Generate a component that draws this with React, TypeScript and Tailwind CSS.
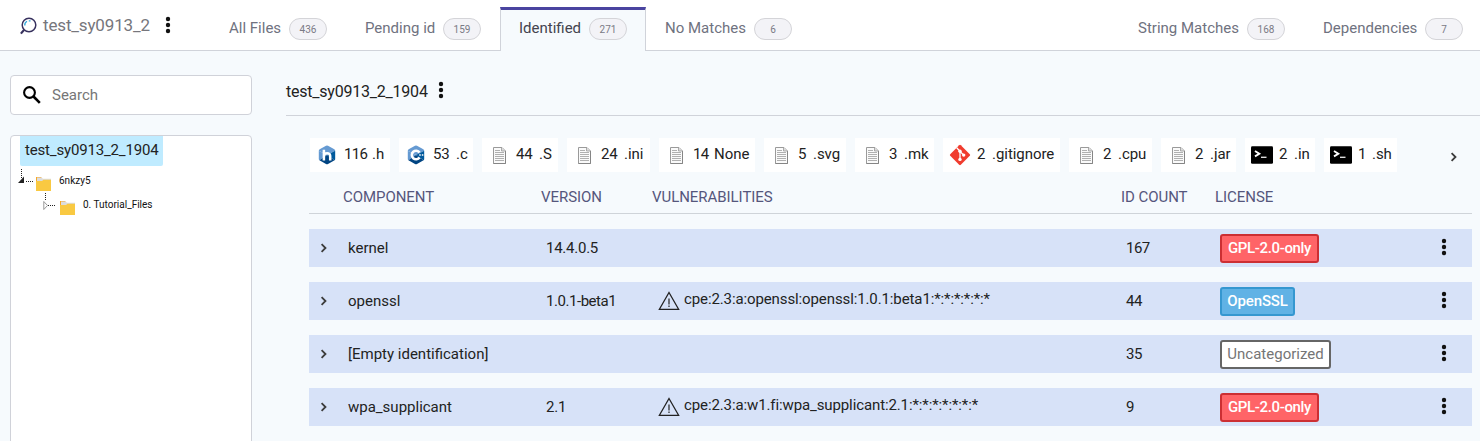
import React from "react";

type Kind = "h" | "c" | "doc" | "git" | "term";

function Dots({ className = "" }: { className?: string }) {
  return (
    <svg className={className} width="6" height="18" viewBox="0 0 6 18">
      <circle cx="3" cy="3" r="2.2" fill="#111" />
      <circle cx="3" cy="9" r="2.2" fill="#111" />
      <circle cx="3" cy="15" r="2.2" fill="#111" />
    </svg>
  );
}

function Chevron() {
  return (
    <svg width="8" height="10" viewBox="0 0 8 10" fill="none" stroke="#3c3c3c" strokeWidth="1.8">
      <path d="M1.6 1.1 5.5 5 1.6 8.9" />
    </svg>
  );
}

function Hexagon({ children }: { children: React.ReactNode }) {
  return (
    <svg width="18" height="20" viewBox="0 0 18 20">
      <path d="M8 .7q1-.5 2 0l6.300 3.600q.9.5.9 1.500L9 10 .8 5.800q0-1 .9-1.500z" fill="#659ad2" />
      <path d="M.8 5.800 9 10l-7.600 5.200q-.6-.5-.6-1.300z" fill="#659ad2" />
      <path d="M17.200 5.800 9 10l7.600 5.200q.6-.5.6-1.300z" fill="#00599c" />
      <path d="M1.400 15.200 9 10l7.600 5.200L10 19.100q-1 .5-2 0z" fill="#004482" />
      {children}
    </svg>
  );
}

function FileIcon({ kind }: { kind: Kind }) {
  switch (kind) {
    case "h":
      return (
        <Hexagon>
          <path d="M5.900 4.800v10.600M5.900 10.500q.4-2.300 3.200-2.300t3.100 2.600v4.600" fill="none" stroke="#fff" strokeWidth="2.500" />
        </Hexagon>
      );
    case "c":
      return (
        <Hexagon>
          <path d="M12.600 7.500A4.300 4.300 0 1 0 12.600 12.500" fill="none" stroke="#fff" strokeWidth="2.500" />
          <path d="M12 10h2M13 9v2M14.600 10h2M15.600 9v2" stroke="#fff" strokeWidth=".7" />
        </Hexagon>
      );
    case "doc":
      return (
        <svg width="13" height="17" viewBox="0 0 13 17">
          <path d="M.5.5h8.500l3.500 3.500v12.500H.5z" fill="#fafafa" stroke="#9a9a9a" />
          <path d="M.5 16.500h12V4" fill="none" stroke="#858585" />
          <path d="M8.500.5v3.500h4" fill="#ddd" stroke="#999" strokeWidth=".8" />
          <path d="M2 3.500h5M2 5.500h9M2 7.500h9M2 9.500h9M2 11.500h9M2 13.500h9" stroke="#b0b0b0" />
        </svg>
      );
    case "git":
      return (
        <svg width="22" height="22" viewBox="0 0 22 22">
          <rect x="3.500" y="3.500" width="15" height="15" rx="1.200" fill="#f03c2e" transform="rotate(45 11 11)" />
          <path d="M7.700 3.800 11 7.200v8M11 7.400l3.600 3.600" fill="none" stroke="#fff" strokeWidth="1.300" />
          <circle cx="11" cy="7.300" r="1.700" fill="#fff" />
          <circle cx="11" cy="15.400" r="1.700" fill="#fff" />
          <circle cx="14.700" cy="11.100" r="1.700" fill="#fff" />
        </svg>
      );
    case "term":
      return (
        <svg width="22" height="18" viewBox="0 0 22 18">
          <rect width="22" height="17.500" y=".2" rx="1.300" fill="#000" />
          <path d="m4 5 4.300 2.700L4 10.400" fill="none" stroke="#fff" strokeWidth="1.900" />
          <path d="M10 11.300h5.500" stroke="#ddd" strokeWidth="1.400" />
        </svg>
      );
  }
}

function Folder() {
  return (
    <svg width="15" height="14" viewBox="0 0 15 14">
      <path d="M0 0h5l1.500 2H15v12H0z" fill="#f9a825" />
      <path d="M1 .5h4.500l1 1.200H15V4H1z" fill="#dcdcdc" />
      <path d="M0 4h6l1.500-1.200H15V14H0z" fill="#f9c942" />
    </svg>
  );
}

function Badge({ n }: { n: number }) {
  return (
    <span className="flex h-[22px] w-[38px] shrink-0 items-center justify-center rounded-full border border-[#d4d4d8] bg-[#f3f3f7] pt-px text-[10px] text-[#7a7a85]">
      {n}
    </span>
  );
}

function Tab({ label, n, className, active }: { label: string; n: number; className: string; active?: boolean }) {
  return (
    <div
      className={
        "flex shrink-0 justify-between border-x " +
        (active
          ? "mt-[7px] h-11 border-t-[3px] border-[#d0d3da] border-t-[#4a44a0] bg-[#f6fafd] pt-2 text-[#44444f] "
          : "mt-[7px] h-[43px] border-transparent pt-[11px] text-[#6f7280] ") + className
      }
    >
      <span className="leading-5 whitespace-nowrap">{label}</span>
      <Badge n={n} />
    </div>
  );
}

const chips: { kind: Kind; n: number; ext: string; w: string; icon: string; num: string }[] = [
  { kind: "h", n: 116, ext: ".h", w: "w-20", icon: "pl-2", num: "w-[28px] tracking-[-0.7px]" },
  { kind: "c", n: 53, ext: ".c", w: "w-[74px]", icon: "pl-2", num: "w-[23px] tracking-[-0.2px]" },
  { kind: "doc", n: 44, ext: ".S", w: "w-[76px]", icon: "pl-[11px]", num: "w-[23px] tracking-[-0.2px]" },
  { kind: "doc", n: 24, ext: ".ini", w: "w-[83px]", icon: "pl-[11px]", num: "w-[23px] tracking-[-0.2px]" },
  { kind: "doc", n: 14, ext: "None", w: "w-24", icon: "pl-[11px]", num: "w-[21px] tracking-[-0.8px]" },
  { kind: "doc", n: 5, ext: ".svg", w: "w-[82px]", icon: "pl-[11px]", num: "w-[15px]" },
  { kind: "doc", n: 3, ext: ".mk", w: "w-[79px]", icon: "pl-[11px]", num: "w-[15px]" },
  { kind: "git", n: 2, ext: ".gitignore", w: "w-[117px]", icon: "pl-1.5", num: "w-[15px]" },
  { kind: "doc", n: 2, ext: ".cpu", w: "w-[83px]", icon: "pl-[11px]", num: "w-[15px]" },
  { kind: "doc", n: 2, ext: ".jar", w: "w-[75px]", icon: "pl-[11px]", num: "w-[15px]" },
  { kind: "term", n: 2, ext: ".in", w: "w-[70px]", icon: "pl-1.5", num: "w-[15px]" },
  { kind: "term", n: 1, ext: ".sh", w: "w-[73px]", icon: "pl-1.5", num: "w-[14px]" },
];

const red = "border-[#cc2f33] bg-[#ff6467] text-white font-medium tracking-[-0.35px]";
const blue = "border-[#3597d0] bg-[#60b2e5] text-white font-medium tracking-[-0.1px]";
const plain = "border-[#666] bg-white text-[#757575]";

const rows = [
  { name: "kernel", version: "14.4.0.5", vt: "tracking-[-0.25px]", cpe: "", count: 167, license: "GPL-2.0-only", style: red, w: "w-[99px]" },
  { name: "openssl", version: "1.0.1-beta1", vt: "tracking-[-0.45px]", cpe: "cpe:2.3:a:openssl:openssl:1.0.1:beta1:*:*:*:*:*:*", count: 44, license: "OpenSSL", style: blue, w: "w-[75px]" },
  { name: "[Empty identification]", version: "", vt: "", cpe: "", count: 35, license: "Uncategorized", style: plain, w: "w-[111px]" },
  { name: "wpa_supplicant", version: "2.1", vt: "tracking-[-0.25px]", cpe: "cpe:2.3:a:w1.fi:wpa_supplicant:2.1:*:*:*:*:*:*:*", count: 9, license: "GPL-2.0-only", style: red, w: "w-[99px]" },
];

function Header() {
  return (
    <header className="flex h-[51px] border-b border-[#d0d3da] bg-white">
      <div className="flex w-[214px] shrink-0 pl-5 pt-4">
        <svg className="mt-px shrink-0" width="17" height="18" viewBox="0 0 17 18" fill="none">
          <circle cx="9" cy="8" r="6.800" stroke="#38325f" strokeWidth="1.500" />
          <path d="M4.200 12.800.9 16.600" stroke="#38325f" strokeWidth="2.200" />
          <path d="M4.800 8.500A4.300 4.300 0 0 1 7 4.300M8.800 3.800h1.700" stroke="#2fa8dc" strokeWidth="1.300" />
        </svg>
        <span className="ml-1.5 w-[108px] text-[17px] leading-[19px] tracking-[-0.15px] whitespace-nowrap text-[#76767c]">test_sy0913_2</span>
        <Dots className="ml-[14px] shrink-0" />
      </div>
      <Tab label="All Files" n={436} className="w-[116px] pl-[14px] pr-0.5" />
      <Tab label="Pending id" n={159} className="ml-5 w-[146px] pl-[14px] pr-[14px]" />
      <Tab label="Identified" n={271} className="ml-1 w-[146px] pl-[18px] pr-[18px]" active />
      <Tab label="No Matches" n={6} className="w-[147px] pl-[18px] pr-0" />
      <div className="flex-1" />
      <Tab label="String Matches" n={168} className="w-[149px] pl-0 pr-0" />
      <Tab label="Dependencies" n={7} className="ml-9 mr-4 w-[142px] pl-0 pr-0" />
    </header>
  );
}

function Sidebar() {
  return (
    <aside className="w-[252px] shrink-0 pl-2.5 pt-6">
      <div className="flex h-10 items-center rounded-[4px] border border-[#d0d2d9] bg-white pl-3">
        <svg width="18" height="18" viewBox="0 0 18 18" fill="none" stroke="#000">
          <circle cx="6.500" cy="6.500" r="5.400" strokeWidth="2.100" />
          <path d="m10.500 10.500 6.300 6.300" strokeWidth="2.600" />
        </svg>
        <span className="ml-[11px] text-[#767676]">Search</span>
      </div>
      <div className="mt-5 h-[320px] rounded-[4px] border border-[#d0d2d9] bg-white">
        <div className="ml-[9px] h-[30px] w-[143px] rounded-b-[2px] bg-[#bfebff] pl-[5px] leading-7 tracking-[-0.17px] whitespace-nowrap text-[#222]">
          test_sy0913_2_1904
        </div>
        <div className="flex h-6 pl-[7px]">
          <svg className="mt-[3px] shrink-0" width="15" height="14" viewBox="0 0 15 14">
            <path d="M3.500 0v9M8 12.500h7" stroke="#222" strokeDasharray="1 1" />
            <path d="M0 14h6V7.500z" fill="#222" />
          </svg>
          <div className="ml-[3px] mt-[11px]"><Folder /></div>
          <span className="ml-2 mt-[9px] text-[10px] leading-3 text-[#111]">6nkzy5</span>
        </div>
        <div className="flex h-6 pl-8">
          <svg className="mt-[3px] shrink-0" width="14" height="17" viewBox="0 0 14 17">
            <path d="M2.500 0v8M5 12.500h8" stroke="#222" strokeDasharray="1 1" />
            <path d="M.8 8.500v8l3.700-4z" fill="#fff" stroke="#999" />
          </svg>
          <div className="ml-[3px] mt-[11px]"><Folder /></div>
          <span className="ml-2 mt-[9px] text-[10px] leading-3 whitespace-nowrap text-[#111]">0. Tutorial_Files</span>
        </div>
      </div>
    </aside>
  );
}

const cols = "grid grid-cols-[39px_198px_110px_470px_94px_1fr_31px]";

export default function App() {
  return (
    <div className="flex h-[441px] w-[1480px] flex-col overflow-hidden bg-[#f6fafd] font-[Roboto,sans-serif] text-[15px] text-[#222]">
      <Header />
      <div className="flex min-h-0 flex-1">
        <Sidebar />
        <main className="ml-[34px] flex-1">
          <div className="flex h-[65px] border-b border-[#d0d3da] pt-[30px]">
            <span className="w-[152px] pt-px text-[16px] leading-5 tracking-[-0.22px] whitespace-nowrap">test_sy0913_2_1904</span>
            <Dots />
          </div>
          <div className="ml-6 mt-[22px] flex h-[34px] gap-[9px]">
            {chips.map((c) => (
              <div key={c.ext} className={"flex shrink-0 items-center bg-white " + c.w}>
                <span className={"w-[33px] shrink-0 " + c.icon}><FileIcon kind={c.kind} /></span>
                <span className="flex pb-0.5 pl-px leading-5 whitespace-nowrap">
                  <span className={"shrink-0 " + c.num}>{c.n}</span>
                  <span className="tracking-[-0.05px]">{c.ext}</span>
                </span>
              </div>
            ))}
            <div className="ml-[44px] flex items-center pt-1"><Chevron /></div>
          </div>
          <div className="ml-[23px] mr-2">
            <div className="flex h-[42px] border-b border-[#cfd4d9] pt-[15px] leading-5 tracking-[-0.05px] whitespace-nowrap text-[#55567c]">
              <span className="ml-[34px] w-[198px]">COMPONENT</span>
              <span className="w-[111px]">VERSION</span>
              <span className="w-[469px]">VULNERABILITIES</span>
              <span className="w-[94px]">ID COUNT</span>
              <span>LICENSE</span>
            </div>
            <div className="mt-[15px] flex flex-col gap-[15px]">
              {rows.map((r) => (
                <div key={r.name} className={"h-[38px] items-center bg-[#d7e2f8] leading-5 whitespace-nowrap " + cols}>
                  <span className="pl-[11px]"><Chevron /></span>
                  <span>{r.name}</span>
                  <span className={r.vt}>{r.version}</span>
                  <span className="flex items-center gap-1 pl-0.5">
                    {r.cpe && (
                      <>
                        <svg className="shrink-0" width="22" height="20" viewBox="0 0 22 20" fill="none" stroke="#222">
                          <path d="M11 1.500 20.600 18.300H1.400z" strokeWidth="1.300" />
                          <path d="M11 7.500v6M11 14.500v1.600" strokeWidth="1.200" />
                        </svg>
                        <span className="pb-1 tracking-[-0.11px]">{r.cpe}</span>
                      </>
                    )}
                  </span>
                  <span className="tracking-[-0.5px]">{r.count}</span>
                  <span className={"flex h-[29px] items-center justify-center rounded-[3px] border-2 " + r.style + " " + r.w}>{r.license}</span>
                  <Dots className="mb-0.5" />
                </div>
              ))}
            </div>
          </div>
        </main>
      </div>
    </div>
  );
}
